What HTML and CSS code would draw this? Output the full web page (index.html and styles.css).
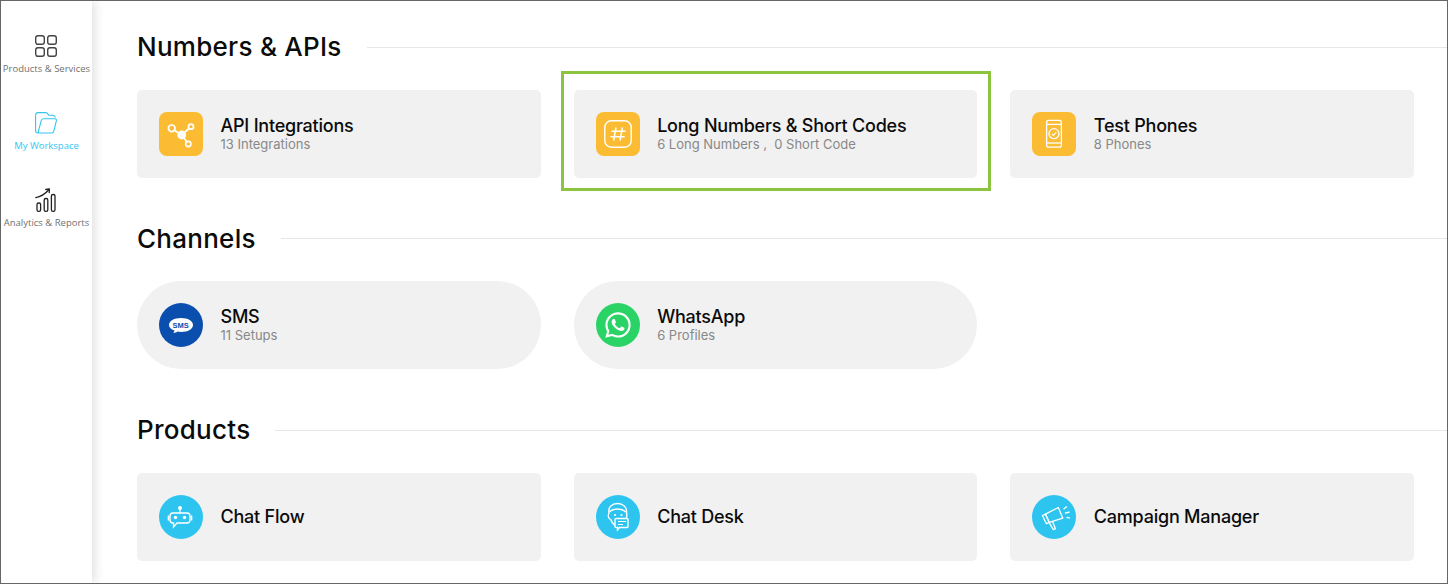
FILE: index.html
```html
<!DOCTYPE html>
<html lang="en">
<head>
<meta charset="utf-8">
<title>Workspace</title>
<link rel="stylesheet" href="styles.css">
</head>
<body>
<div class="frame">
  <nav class="sidebar">
    <a class="nav-item">
      <svg class="nav-icon" viewBox="0 0 22 22" fill="none" stroke="#444" stroke-width="1.4"><rect x="0.7" y="0.7" width="8.6" height="8.6" rx="2.2"/><rect x="12.7" y="0.7" width="8.6" height="8.6" rx="2.2"/><rect x="0.7" y="12.7" width="8.6" height="8.6" rx="2.2"/><rect x="12.7" y="12.7" width="8.6" height="8.6" rx="2.2"/></svg>
      <span class="nav-label">Products &amp; Services</span>
    </a>
    <a class="nav-item active">
      <svg class="nav-icon" viewBox="0 0 22 22" fill="none" stroke="#35c5f0" stroke-width="1.1" stroke-linejoin="round"><path d="M4 21H3a2.5 2.5 0 0 1-2.4-2.5V3A2.5 2.5 0 0 1 3 .6h7.500a3 3 0 0 1 2.600 1.600l.4 1H18a2.600 2.600 0 0 1 2.300 2.300"/><path d="M3.400 19.300 6.200 8.600A2.600 2.600 0 0 1 8.700 6.700H20a1.500 1.500 0 0 1 1.400 1.900l-2.600 10.500A2.400 2.400 0 0 1 16.400 21H4.600a1.300 1.300 0 0 1-1.200-1.700z"/></svg>
      <span class="nav-label">My Workspace</span>
    </a>
    <a class="nav-item">
      <svg class="nav-icon tall" viewBox="0 0 22 24" fill="none" stroke="#222" stroke-width="1.3" stroke-linejoin="round" stroke-linecap="round"><rect x="2" y="15" width="3.6" height="8.3" rx="1.6"/><rect x="9.2" y="10.5" width="3.6" height="12.8" rx="1.6"/><rect x="16.4" y="6.5" width="3.6" height="16.8" rx="1.6"/><path d="M.8 9.6C5.500 8.800 9.500 6.600 13.600 2"/><path d="M10.800 1.500 14.400 1l-.2 3.600"/></svg>
      <span class="nav-label">Analytics &amp; Reports</span>
    </a>
  </nav>
  <main class="content">
    <section class="section">
      <h2 class="heading"><span class="heading-text">Numbers &amp; APIs</span></h2>
      <div class="grid">
        <div class="card">
          <span class="icon tile">
            <svg viewBox="0 0 44 44" fill="none" stroke="#fff" stroke-width="1.7"><line x1="15" y1="18" x2="22.700" y2="23"/><line x1="22.700" y1="23" x2="30.500" y2="16"/><line x1="22.700" y1="23" x2="28" y2="30"/><circle cx="12.700" cy="16.300" r="3.300"/><circle cx="32" cy="14.700" r="2.500"/><circle cx="29.300" cy="32" r="2.600"/><circle cx="22.700" cy="23" r="4.400" fill="#fff" stroke="none"/></svg>
          </span>
          <div class="text"><div class="title">API Integrations</div><div class="sub">13 Integrations</div></div>
        </div>
        <div class="card highlighted">
          <span class="icon tile">
            <svg viewBox="0 0 44 44" fill="none" stroke="#fff"><rect x="8.800" y="8.800" width="26.400" height="26.400" rx="6.500" stroke-width="1.400"/><path stroke-width="1.500" d="M20 15.500 17.600 28.500M26.400 15.500 24 28.500M15.400 19.300h14.200M14.500 24.700h14.200"/></svg>
          </span>
          <div class="text"><div class="title">Long Numbers &amp; Short Codes</div><div class="sub">6 Long Numbers ,&nbsp; 0 Short Code</div></div>
        </div>
        <div class="card">
          <span class="icon tile">
            <svg viewBox="0 0 44 44" fill="none" stroke="#fff" stroke-width="1.300"><rect x="14.600" y="8.400" width="14.800" height="26.800" rx="2.200"/><line x1="14.600" y1="12.400" x2="29.400" y2="12.400"/><line x1="14.600" y1="31" x2="29.400" y2="31"/><circle cx="22" cy="21.700" r="5"/><path d="m19.800 21.800 1.600 1.600 2.900-3.200" stroke-width="1.200"/></svg>
          </span>
          <div class="text"><div class="title">Test Phones</div><div class="sub">8 Phones</div></div>
        </div>
      </div>
    </section>
    <section class="section channels">
      <h2 class="heading"><span class="heading-text">Channels</span></h2>
      <div class="grid">
        <div class="card pill">
          <span class="icon round sms">
            <svg viewBox="0 0 44 44"><path fill="#fff" d="M22 15c7 0 12 2.800 12 7s-5 7-12 7c-1.500 0-2.500-.1-3.500-.4-1.100 1-2.600 1.400-4.500 1.400.9-.8 1.300-1.600 1.400-2.600-3.300-1.100-5.400-3.100-5.400-5.400 0-4.200 5-7 12-7z"/><text class="sms-mark" x="21.700" y="24.500" text-anchor="middle">SMS</text></svg>
          </span>
          <div class="text"><div class="title">SMS</div><div class="sub">11 Setups</div></div>
        </div>
        <div class="card pill">
          <span class="icon round wa">
            <svg viewBox="-8.700 -8.700 41.400 41.400"><path fill="#fff" d="M17.472 14.382c-.297-.149-1.758-.867-2.03-.967-.273-.099-.471-.148-.67.15-.197.297-.767.966-.94 1.164-.173.199-.347.223-.644.075-.297-.15-1.255-.463-2.39-1.475-.883-.788-1.48-1.761-1.653-2.059-.173-.297-.018-.458.13-.606.134-.133.298-.347.446-.52.149-.174.198-.298.298-.497.099-.198.05-.371-.025-.52-.075-.149-.669-1.612-.916-2.207-.242-.579-.487-.5-.669-.51-.173-.008-.371-.01-.57-.01-.198 0-.52.074-.792.372-.272.297-1.04 1.016-1.04 2.479 0 1.462 1.065 2.875 1.213 3.074.149.198 2.096 3.2 5.077 4.487.709.306 1.262.489 1.694.625.712.227 1.36.195 1.871.118.571-.085 1.758-.719 2.006-1.413.248-.694.248-1.289.173-1.413-.074-.124-.272-.198-.57-.347m-5.421 7.403h-.004a9.87 9.87 0 01-5.031-1.378l-.361-.214-3.741.982.998-3.648-.235-.374a9.86 9.86 0 01-1.51-5.26c.001-5.45 4.436-9.884 9.888-9.884 2.64 0 5.122 1.03 6.988 2.898a9.825 9.825 0 012.893 6.994c-.003 5.45-4.437 9.884-9.885 9.884m8.413-18.297A11.815 11.815 0 0012.05 0C5.495 0 .16 5.335.157 11.892c0 2.096.547 4.142 1.588 5.945L.057 24l6.305-1.654a11.882 11.882 0 005.683 1.448h.005c6.554 0 11.89-5.335 11.893-11.893a11.821 11.821 0 00-3.48-8.413z"/></svg>
          </span>
          <div class="text"><div class="title">WhatsApp</div><div class="sub">6 Profiles</div></div>
        </div>
      </div>
    </section>
    <section class="section">
      <h2 class="heading"><span class="heading-text">Products</span></h2>
      <div class="grid">
        <div class="card">
          <span class="icon round sky">
            <svg viewBox="0 0 44 44" fill="none" stroke="#fff" stroke-width="1.300"><circle cx="21" cy="13" r="2" fill="#fff" stroke="none"/><line x1="21" y1="14.500" x2="21" y2="18"/><path d="M14 18h14a3 3 0 0 1 3 3v4a3 3 0 0 1-3 3H18l-3.500 4v-4H14a3 3 0 0 1-3-3v-4a3 3 0 0 1 3-3z"/><path d="M9.500 20.500v5M32.500 20.500v5" stroke-width="1.600"/><circle cx="16.500" cy="22.500" r="1.700" fill="#fff" stroke="none"/><circle cx="25.500" cy="22.500" r="1.700" fill="#fff" stroke="none"/></svg>
          </span>
          <div class="text"><div class="title">Chat Flow</div></div>
        </div>
        <div class="card">
          <span class="icon round sky">
            <svg viewBox="0 0 44 44" fill="none" stroke="#fff" stroke-width="1.400"><path d="M14 24c-2-1-2-4-1-6-1-6 3-9.500 8.500-9.500S31 12 30.500 18c.5 2 .5 4-.5 5"/><path d="M13.500 17c2-2 4-3 8-3s6 1 8 3"/><circle cx="19" cy="20" r="1.100" fill="#fff" stroke="none"/><circle cx="25.500" cy="20" r="1.100" fill="#fff" stroke="none"/><path d="M14.500 24c1 3 2.500 5 4.500 6.500"/><path d="M20 23.500h11a1 1 0 0 1 1 1v7a1 1 0 0 1-1 1h-7.500l-2 2.300v-2.300H20a1 1 0 0 1-1-1v-7a1 1 0 0 1 1-1z" fill="#2ec4f0"/><path d="M22 26.500h8M22 29.500h5" stroke-width="1.100"/></svg>
          </span>
          <div class="text"><div class="title">Chat Desk</div></div>
        </div>
        <div class="card">
          <span class="icon round sky">
            <svg viewBox="0 0 44 44" fill="none" stroke="#fff" stroke-width="1.300" stroke-linejoin="round" stroke-linecap="round"><path d="m10.500 20.500 3-1.300 3.800 8.200-3 1.300z"/><path d="m13.500 19.200 12.800-6.700 4.500 10.700-13.500 4.200z"/><path d="m17.500 28.200 3.800 6.500 2.200-1-2.700-6.500"/><path d="M32 13.800l2.500-2M33.500 18l3.700-.9M35 22.500l2.500.3"/></svg>
          </span>
          <div class="text"><div class="title">Campaign Manager</div></div>
        </div>
      </div>
    </section>
  </main>
</div>
</body>
</html>
```

FILE: styles.css
```css
* { box-sizing: border-box; }
html, body { margin: 0; height: 584px; overflow: hidden; background: #fff; }
body { font-family: "Inter", "Liberation Sans", sans-serif; color: #0b0b0b; }

.frame {
  display: flex;
  height: 584px;
  border: 1px solid #666;
  overflow: hidden;
}

.sidebar {
  flex: 0 0 91px;
  display: flex;
  flex-direction: column;
  align-items: center;
  padding-top: 34px;
  background: #fff;
  box-shadow: 3px 0 10px rgba(0, 0, 0, 0.12);
  position: relative;
}
.nav-item {
  display: flex;
  flex-direction: column;
  align-items: center;
  height: 77px;
  color: #707070;
}
.nav-item.active { color: #35c5f0; }
.nav-icon { width: 22px; height: 22px; display: block; flex: none; }
.nav-icon.tall { height: 24px; margin: -1px 0 -1px; }
.nav-label {
  font-family: "Open Sans", sans-serif;
  font-size: 9.5px;
  line-height: 12px;
  margin-top: 6px;
  white-space: nowrap;
}

.content { flex: 1; min-width: 0; padding: 31px 0 0 45px; }

.section { margin-bottom: 45px; }
.section.channels { margin-bottom: 46px; }
.heading {
  display: flex;
  align-items: center;
  gap: 25px;
  height: 30px;
  margin: 0 0 28px;
  font-size: 26px;
  font-weight: 500;
  letter-spacing: 0.27px;
  white-space: nowrap;
}
.heading-text { padding-bottom: 2px; }
.channels .heading-text { padding-bottom: 0; }
.heading::after {
  content: "";
  flex: 1;
  height: 1px;
  background: #e6e6e6;
}

.grid {
  display: grid;
  grid-template-columns: repeat(3, 403.67px);
  column-gap: 33px;
}

.card {
  display: flex;
  align-items: center;
  gap: 17.5px;
  height: 88px;
  padding-left: 22px;
  background: #f1f1f1;
  border-radius: 5px;
  position: relative;
}
.card.pill { border-radius: 44px; }
.card.highlighted::after {
  content: "";
  position: absolute;
  inset: -19px -14px -13px -13px;
  border: 3px solid #8bc43f;
  pointer-events: none;
}

.icon { flex: none; width: 44px; height: 44px; display: block; }
.icon svg { display: block; width: 44px; height: 44px; }
.tile { background: #fbbc33; border-radius: 8px; }
.round { border-radius: 50%; }
.sms { background: #0a4eae; }
.wa { background: #29d366; }
.sky { background: #2ec4f0; }
.sms-mark {
  font-family: "Liberation Sans", sans-serif;
  font-size: 7.5px;
  font-weight: 700;
  fill: #0a4eae;
}

.text { display: flex; flex-direction: column; }
.title { font-size: 18px; line-height: 22px; font-weight: 500; letter-spacing: -0.22px; }
.sub { font-size: 13px; line-height: 16px; color: #888; margin: -1px 0 2px; }
```
